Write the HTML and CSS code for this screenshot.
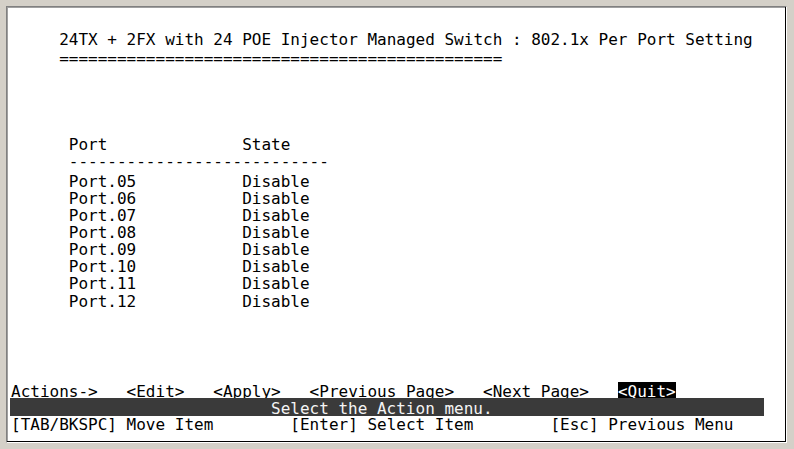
FILE: index.html
```html
<!DOCTYPE html>
<html>
<head>
<meta charset="utf-8">
<title>802.1x Per Port Setting</title>
<link rel="stylesheet" href="styles.css">
</head>
<body>
<div class="window">
  <div class="term">
    <div class="line title">     24TX + 2FX with 24 POE Injector Managed Switch : 802.1x Per Port Setting</div>
    <div class="line rule">     ==============================================</div>
    <div class="line head">      Port              State</div>
    <div class="line dashes">      ---------------------------</div>
    <div class="ports">
      <div class="line">      Port.05           Disable</div>
      <div class="line">      Port.06           Disable</div>
      <div class="line">      Port.07           Disable</div>
      <div class="line">      Port.08           Disable</div>
      <div class="line">      Port.09           Disable</div>
      <div class="line">      Port.10           Disable</div>
      <div class="line">      Port.11           Disable</div>
      <div class="line">      Port.12           Disable</div>
    </div>
    <div class="line actions">Actions->   &lt;Edit&gt;   &lt;Apply&gt;   &lt;Previous Page&gt;   &lt;Next Page&gt;   <span class="sel">&lt;Quit&gt;</span></div>
    <div class="line bar">Select the Action menu.</div>
    <div class="line help">[TAB/BKSPC] Move Item        [Enter] Select Item        [Esc] Previous Menu</div>
  </div>
</div>
</body>
</html>
```
FILE: styles.css
```css
html, body {
  margin: 0;
  padding: 0;
  height: 449px;
  overflow: hidden;
  background: #d4d0c8;
}

.window {
  box-sizing: border-box;
  margin: 6px 0 0 6px;
  width: 781px;
  height: 437px;
  background: #ffffff;
  border-top: 1px solid #808080;
  border-left: 1px solid #808080;
  border-right: 1px solid #ffffff;
  border-bottom: 1px solid #ffffff;
  box-shadow: inset -1px -1px 0 #000000, inset 1px 1px 0 #a0a0a0;
  padding-left: 4px;
}

.term {
  font-family: "DejaVu Sans Mono", "Liberation Mono", monospace;
  font-size: 16px;
  color: #000000;
  display: flex;
  flex-direction: column;
}

.line {
  white-space: pre;
  height: 17.2px;
  line-height: 17.2px;
}

.title {
  margin-top: 24px;
}

.rule {
  padding-top: 2px;
  height: 15.2px;
}

.head {
  margin-top: 70.2px;
}

.ports {
  margin-top: 2.6px;
  display: flex;
  flex-direction: column;
}

.ports .line {
  height: 17.15px;
  line-height: 17.15px;
}

.actions {
  margin-top: 72.2px;
  height: 16px;
  line-height: 20px;
}

.sel {
  display: inline-block;
  vertical-align: top;
  height: 16px;
  line-height: 20px;
  background: #000000;
  color: #ffffff;
}

.bar {
  margin-left: -1px;
  width: 754px;
  height: 18px;
  line-height: 22px;
  background: #3a3a3a;
  color: #f4f4f4;
  padding-left: 261px;
  box-sizing: border-box;
}

.help {
  height: 17px;
  line-height: 17px;
}
```
